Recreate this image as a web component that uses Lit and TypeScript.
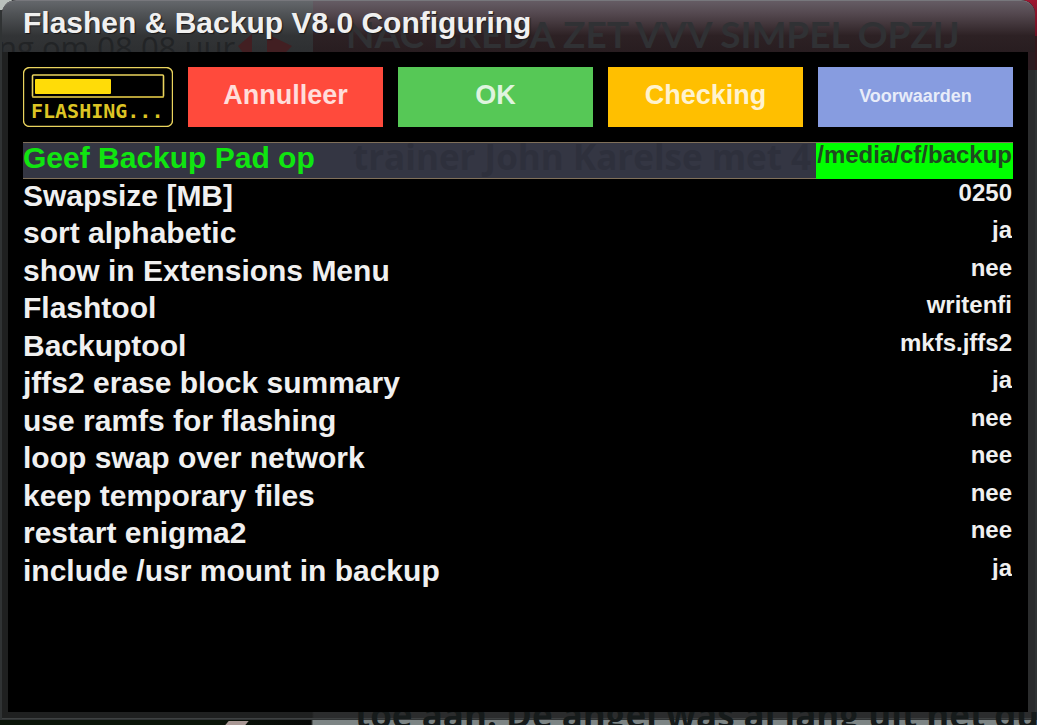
import { LitElement, html, css, svg } from "lit";
import { customElement, state } from "lit/decorators.js";

interface Setting {
  id: string;
  label: string;
  value: string;
  options?: string[];
}

const YES_NO = ["ja", "nee"];

const SETTINGS: Setting[] = [
  { id: "path", label: "Geef Backup Pad op", value: "/media/cf/backup" },
  { id: "swap", label: "Swapsize [MB]", value: "0250" },
  { id: "sort", label: "sort alphabetic", value: "ja", options: YES_NO },
  { id: "menu", label: "show in Extensions Menu", value: "nee", options: YES_NO },
  { id: "flashtool", label: "Flashtool", value: "writenfi", options: ["writenfi"] },
  { id: "backuptool", label: "Backuptool", value: "mkfs.jffs2", options: ["mkfs.jffs2"] },
  { id: "summary", label: "jffs2 erase block summary", value: "ja", options: YES_NO },
  { id: "ramfs", label: "use ramfs for flashing", value: "nee", options: YES_NO },
  { id: "loop", label: "loop swap over network", value: "nee", options: YES_NO },
  { id: "keep", label: "keep temporary files", value: "nee", options: YES_NO },
  { id: "restart", label: "restart enigma2", value: "nee", options: YES_NO },
  { id: "usr", label: "include /usr mount in backup", value: "ja", options: YES_NO },
];

@customElement("flash-badge")
export class FlashBadge extends LitElement {
  static styles = css`
    :host {
      display: block;
      width: 150px;
      height: 60px;
    }
    .badge {
      display: block;
      width: 100%;
      height: 100%;
    }
    .word {
      font: bold 20px "DejaVu Sans Mono", monospace;
      fill: #dcc424;
    }
  `;

  render() {
    return html`<svg class="badge" viewBox="0 0 150 60" role="img" aria-label="Flashing">
      ${svg`
        <rect x="0.5" y="0.5" width="149" height="59" rx="6" fill="none" stroke="#ead45e" stroke-width="1.4" />
        <rect x="9.5" y="8" width="131" height="22" rx="1" fill="none" stroke="#ead45e" stroke-width="1.6" />
        <path d="M9 30H141" stroke="#b9a02a" stroke-width="1" />
        <rect x="12" y="12" width="76" height="15" rx="1" fill="#ffdc08" />
        <text class="word" x="8" y="51">FLASHING...</text>
      `}
    </svg>`;
  }
}

@customElement("app-root")
export class AppRoot extends LitElement {
  static styles = css`
    :host {
      display: block;
      font-family: "Liberation Sans", Arial, sans-serif;
      font-weight: bold;
      color: #f0f0f0;
    }
    * {
      box-sizing: border-box;
    }
    .screen {
      position: relative;
      min-height: 100vh;
      padding: 0 2px 6px;
      overflow: hidden;
      display: flex;
      background:
        linear-gradient(#b9c0bc, #b9c0bc) 0 0 / 12px 10px no-repeat,
        linear-gradient(#9c1630, #6c1023) 100% 0 / 14px 36px no-repeat,
        linear-gradient(#33181c, #33181c) 100% 36px / 14px 34px no-repeat,
        linear-gradient(90deg, #0a1408 0 21%, #060806 30%, #7d8585 30.2%) 0 100% / 100% 5px no-repeat,
        #303334;
    }
    .ball {
      position: absolute;
      left: 227px;
      bottom: 0;
      width: 20px;
      height: 4px;
      background: #a89793;
      transform: skewX(-40deg);
    }
    .ticker {
      position: absolute;
      left: 355px;
      right: 0;
      bottom: 0;
      height: 13px;
      overflow: hidden;
      font: bold 35px/40px "Open Sans", sans-serif;
      white-space: nowrap;
      color: #161b1b;
    }
    .subtitle {
      display: block;
      margin-top: -17px;
    }
    .window {
      position: relative;
      flex: 1;
      display: flex;
      flex-direction: column;
      padding: 0 7px 6px 6px;
      border-radius: 14px 14px 0 0;
      background:
        linear-gradient(#2c1c20, #2c1c20) 100% 0 / 7px 70px no-repeat,
        linear-gradient(90deg, #1f2020 30%, #2b2c2d 30.2%);
      border-bottom: 1px solid #3e4142;
      overflow: hidden;
    }
    .bar {
      position: relative;
      height: 52px;
      margin: 0 -7px 0 -6px;
      padding: 5px 21px;
      border-radius: 14px 14px 0 0;
      border-top: 1px solid #77777c;
      overflow: hidden;
      background:
        linear-gradient(#64676b 0, #505356 25%, #323436 68%, #2d2f31) 0 0 / 311px 100% no-repeat,
        linear-gradient(#655c64 0, #54484f 25%, #2d2124 68%, #281d20);
    }
    .title {
      position: relative;
      margin: 0;
      font-size: 30px;
      line-height: 34px;
      white-space: nowrap;
      text-shadow: 1px 1px 1px #18181a;
    }
    .ghost {
      position: absolute;
      white-space: nowrap;
      pointer-events: none;
    }
    .clock {
      left: -4px;
      top: 26px;
      font: 31px/40px "Open Sans", sans-serif;
      color: #222426;
    }
    .headline {
      left: 344px;
      top: 9px;
      font: bold 37px/48px "Lato", sans-serif;
      color: #303134;
    }
    .diamonds {
      position: absolute;
      left: 236px;
      top: 33px;
    }
    .panel {
      flex: 1;
      padding: 15px;
      background: #000;
    }
    .actions {
      display: flex;
      gap: 15px;
    }
    .action {
      flex: 1;
      height: 60px;
      padding: 0 0 4px;
      border: 0;
      border-radius: 0;
      font: bold 27px/30px "Liberation Sans", Arial, sans-serif;
      color: rgba(255, 255, 255, 0.82);
    }
    .red {
      background: #ff4a3c;
    }
    .green {
      background: #56c856;
    }
    .yellow {
      background: #ffbf00;
    }
    .blue {
      background: #879ce0;
      font-size: 18px;
      padding-bottom: 2px;
    }
    .list {
      display: grid;
      grid-template-rows: repeat(12, 1fr);
      height: 450px;
      margin: 15px 0 0;
    }
    .row {
      position: relative;
      display: flex;
      justify-content: space-between;
    }
    .name {
      position: relative;
      z-index: 1;
      font-size: 30px;
      line-height: 32px;
      white-space: nowrap;
    }
    .value {
      position: relative;
      width: 197px;
      height: 25px;
      padding: 0 1px 0 0;
      border: 0;
      border-radius: 0;
      outline: 0;
      appearance: none;
      background: transparent;
      color: #f0f0f0;
      font: bold 24px/25px "Liberation Sans", Arial, sans-serif;
      text-align: right;
      text-align-last: right;
    }
    .selected {
      background: #343643;
      height: 37px;
      box-shadow:
        inset 0 1px #80705a,
        inset 0 -1px #80705a;
    }
    .selected .name {
      color: #10e510;
    }
    .selected .value {
      height: 36px;
      margin-top: 1px;
      padding-bottom: 12px;
      background: #00ff00;
      color: #204a20;
    }
    .behind {
      left: 330px;
      top: -3px;
      font: bold 35px/36px "Open Sans", sans-serif;
      color: #2e303c;
    }
  `;

  @state() private selected = 0;

  private renderControl(s: Setting) {
    return s.options
      ? html`<select class="value" id=${s.id}>
          ${s.options.map((o) => html`<option ?selected=${o === s.value}>${o}</option>`)}
        </select>`
      : html`<input class="value" id=${s.id} type="text" spellcheck="false" .value=${s.value} />`;
  }

  render() {
    return html`
      <div class="screen">
        <div class="ball"></div>
        <div class="window">
          <header class="bar">
            <span class="ghost clock" aria-hidden="true">ng om 08.08 uur</span>
            <svg class="diamonds" width="56" height="20" viewBox="0 0 56 20" aria-hidden="true">
              <path d="M0 12L14 0V20H6Z M29 0L54 12L46 20H29Z" fill="#421f22" />
            </svg>
            <span class="ghost headline" aria-hidden="true">NAC BREDA ZET VVV SIMPEL OPZIJ</span>
            <h1 class="title">Flashen &amp; Backup V8.0 Configuring</h1>
          </header>
          <main class="panel">
            <div class="actions">
              <flash-badge></flash-badge>
              <button class="action red">Annulleer</button>
              <button class="action green">OK</button>
              <button class="action yellow">Checking</button>
              <button class="action blue">Voorwaarden</button>
            </div>
            <form class="list">
              ${SETTINGS.map(
                (s, i) => html`<div
                  class="row ${i === this.selected ? "selected" : ""}"
                  @focusin=${() => (this.selected = i)}
                >
                  ${i === 0
                    ? html`<span class="ghost behind" aria-hidden="true">trainer John Karelse met 4</span>`
                    : ""}
                  <label class="name" for=${s.id}>${s.label}</label>
                  ${this.renderControl(s)}
                </div>`,
              )}
            </form>
          </main>
        </div>
        <div class="ticker" aria-hidden="true">
          <span class="subtitle">toe aan. De angel was al lang uit het duel</span>
        </div>
      </div>
    `;
  }
}
